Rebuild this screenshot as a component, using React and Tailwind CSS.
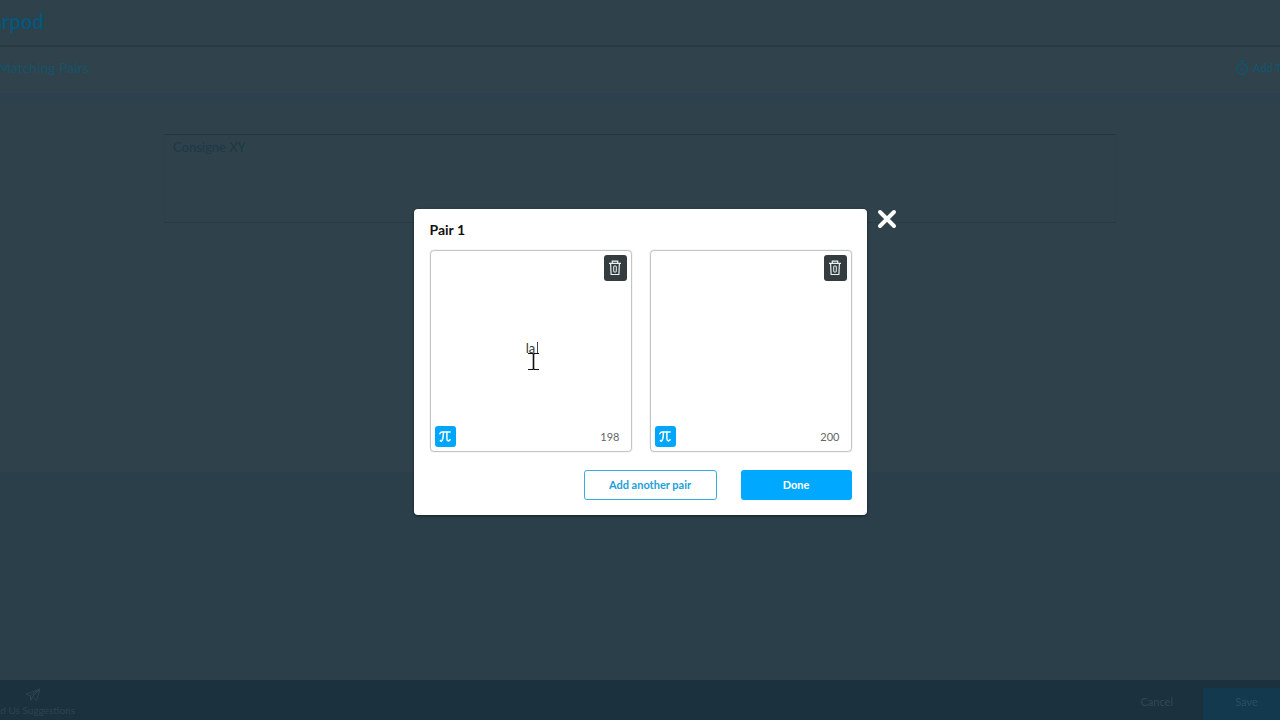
import React, { useState } from "react";

const TrashIcon = () => (
  <svg width="14" height="16" viewBox="0 0 14 16" fill="none" stroke="#e8f2f2" strokeWidth="1.2" aria-hidden="true">
    <path d="M1 3.3h12M4.3 3V1.2h5.4V3M2.6 3.5l.5 11h7.8l.5-11" />
    <path d="M5.7 6.2v5.6M8.3 6.2v5.6M5.9 6h2.2M5.9 12h2.2" strokeWidth="1" />
  </svg>
);

const PiIcon = () => (
  <svg width="12" height="11" viewBox="0 0 12 11" fill="none" stroke="#fff" strokeLinecap="round" aria-hidden="true">
    <path d="M.8 2.8C1.3 1.2 2 1 3.2 1h8" strokeWidth="1.3" />
    <path d="M4.4 1.2c0 4-.4 7-1.6 8.6-.6.7-1.5.3-1.4-.4M7.9 1.2v6.6c0 2.2 1.8 2.8 3.2 1" strokeWidth="1.5" />
  </svg>
);

const PaperPlaneIcon = () => (
  <svg width="16" height="14" viewBox="0 0 16 14" fill="none" stroke="currentColor" aria-hidden="true">
    <path d="M1 6.2 15 1l-3.6 11.6-4.2-3.8L15 1 5.4 7.8zM5.4 7.8l.2 5 1.6-4" />
  </svg>
);

const TimerIcon = () => (
  <svg width="14" height="16" viewBox="0 0 14 16" fill="none" stroke="currentColor" strokeWidth="1.4" aria-hidden="true">
    <circle cx="7" cy="9" r="5.3" />
    <path d="M5 1h4M7 1v2.6M4.5 9h5M11 4.4l1.2-1" />
  </svg>
);

const TextCursor = () => (
  <svg width="11" height="19" viewBox="0 0 11 19" fill="none" stroke="#111" aria-hidden="true">
    <path d="M0 1.5h4.5l1 .5 1-.5H11M0 17.5h4.5l1-.5 1 .5H11" strokeWidth="1.2" />
    <path d="M5.5 2v15" strokeWidth="1.6" />
  </svg>
);

const PairCard = ({ label, value, onChange, active }) => (
  <div className="relative flex-1 aspect-square flex flex-col justify-between border border-[#c4c4c4] rounded-[4px] p-1 shadow-[0_0_1px_rgba(0,0,0,0.35)]">
    <div className="flex justify-end">
      <button
        type="button"
        aria-label={`Delete ${label}`}
        onClick={() => onChange("")}
        className="w-[23px] h-[26px] flex items-center justify-center rounded-[3px] bg-[#353c3f]"
      >
        <TrashIcon />
      </button>
    </div>
    <textarea
      aria-label={label}
      rows={1}
      maxLength={200}
      value={value}
      onChange={(e) => onChange(e.target.value)}
      className="w-full h-5 mb-3 resize-none overflow-hidden outline-none text-center text-[13px] leading-5 text-[#333]"
    />
    <div className="flex items-center justify-between pr-[7px]">
      <button
        type="button"
        aria-label="Insert equation"
        className="w-[21px] h-[21px] flex items-center justify-center rounded-[3px] bg-[#00a6fb]"
      >
        <PiIcon />
      </button>
      <span className="text-[11px] leading-4 text-[#666]">{200 - value.length}</span>
    </div>
    {active && (
      <>
        <div className="absolute left-[106px] top-[91px] w-px h-3 bg-[#444]" />
        <div className="absolute left-[97px] top-[101px] pointer-events-none">
          <TextCursor />
        </div>
      </>
    )}
  </div>
);

const App = () => {
  const [first, setFirst] = useState("la");
  const [second, setSecond] = useState("");

  return (
    <div className="relative min-h-screen flex flex-col overflow-hidden bg-[#2b3f4a] font-['Lato','Open_Sans',sans-serif]">
      {/* Page header */}
      <header className="h-[47px] pb-1 flex items-center bg-[#2f414a] border-b-2 border-[#293a43]">
        <div className="-ml-[30px] text-[20px] leading-6 font-bold text-[#07557a]">nearpod</div>
      </header>
      <div className="h-[46px] pb-1 flex items-center justify-between bg-[#30424b] text-[#155368]">
        <h1 className="-ml-[2px] text-[14px] leading-5">Matching Pairs</h1>
        <button type="button" className="w-[45px] flex items-center gap-1 overflow-hidden whitespace-nowrap text-[11px] font-bold">
          <span className="shrink-0"><TimerIcon /></span>
          Add Timer
        </button>
      </div>
      <div className="h-[11px] bg-[#2c404d]" />

      {/* Activity instructions */}
      <main className="flex-1 flex flex-col bg-[#2b3f4a]">
        <div className="h-[368px] pt-[30px] px-[164px] bg-[#2f414a]">
          <textarea
            aria-label="Instructions"
            defaultValue="Consigne XY"
            className="block w-full h-[89px] px-2 py-1 resize-none outline-none border border-t-[#25363f] border-x-[#2d3f48] border-b-[#283b44] text-[13px] leading-4 text-[#1a3a49]"
          />
        </div>
      </main>

      <footer className="h-10 flex justify-between bg-[#1c313e] text-[#2c4350]">
        <a href="#suggestions" className="-ml-4 pt-2 flex flex-col items-center text-[10px] leading-4">
          <span className="pl-2"><PaperPlaneIcon /></span>
          Send Us Suggestions
        </a>
        <div className="flex pt-2 text-[11px]">
          <button type="button" className="px-[30px] pb-1 text-[#2f4855]">Cancel</button>
          <button type="button" className="w-[77px] pl-[10px] pb-1 bg-[#12394d] text-[#2a4e60]">Save</button>
        </div>
      </footer>

      {/* Pair editor */}
      <div className="absolute inset-0 flex items-center justify-center pt-1">
        <div
          role="dialog"
          aria-labelledby="pair-title"
          className="relative w-[453px] bg-white rounded-[4px] pl-4 pr-[15px] pt-[11px] pb-[15px] shadow-[0_1px_3px_rgba(0,0,0,0.5)]"
        >
          <h2 id="pair-title" className="text-[14px] leading-5 font-bold text-[#111]">Pair 1</h2>
          <div className="mt-[10px] flex gap-[18px]">
            <PairCard label="Pair 1, first item" value={first} onChange={setFirst} active />
            <PairCard label="Pair 1, second item" value={second} onChange={setSecond} />
          </div>
          <div className="mt-[18px] flex justify-end gap-6 text-[11px] font-bold">
            <button type="button" className="w-[133px] h-[30px] rounded-[3px] border border-[#35ade0] text-[#1c9fd8]">
              Add another pair
            </button>
            <button type="button" className="w-[111px] h-[30px] rounded-[3px] bg-[#00a8ff] text-white">
              Done
            </button>
          </div>
          <button type="button" aria-label="Close" className="absolute left-full top-0 ml-[10px]">
            <svg width="20" height="20" viewBox="0 0 20 20" stroke="#fff" strokeWidth="4" strokeLinecap="round" aria-hidden="true">
              <path d="M3 3l14 14M17 3L3 17" />
            </svg>
          </button>
        </div>
      </div>
    </div>
  );
};

export default App;
